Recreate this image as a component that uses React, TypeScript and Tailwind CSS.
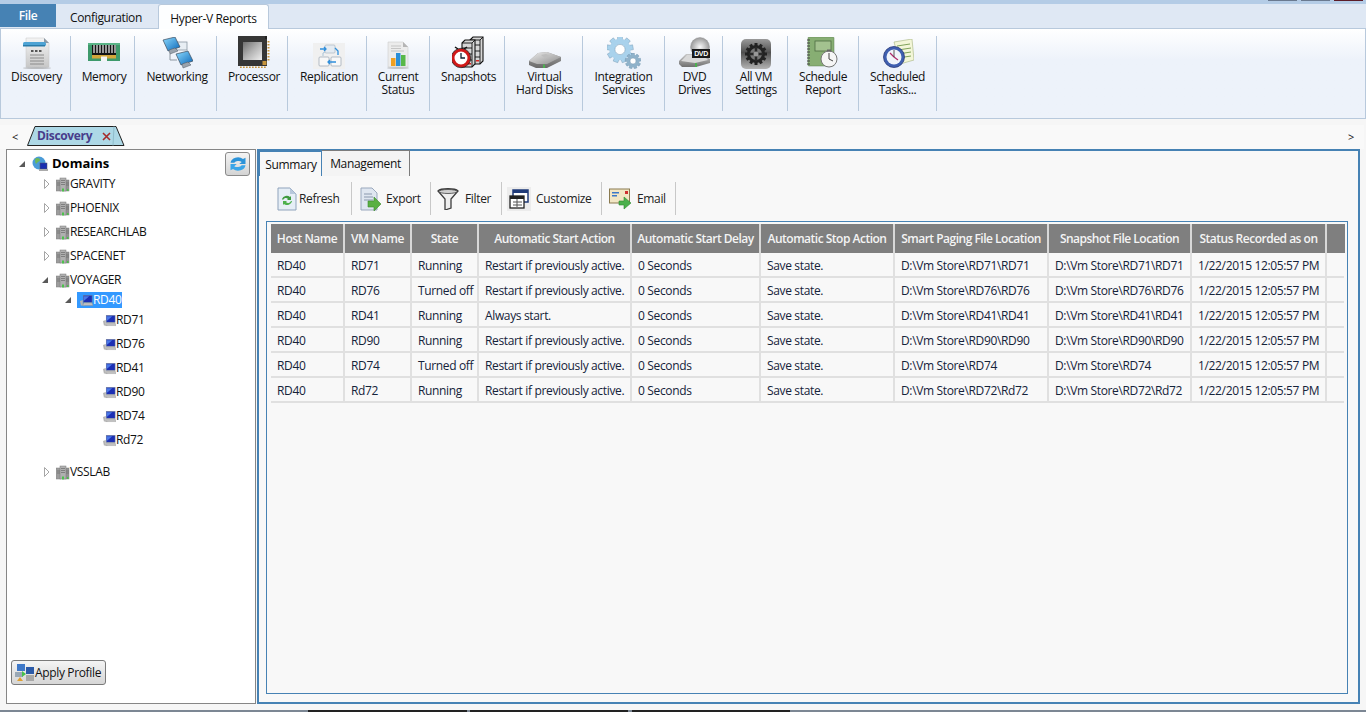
import React from "react";

const font = { fontFamily: '"Open Sans", "Noto Sans", sans-serif' };

function IDiscovery() {
  return (
    <svg width="32" height="32" viewBox="0 0 32 32">
      <defs>
        <linearGradient id="dg" x1="0" y1="0" x2="0" y2="1"><stop offset="0" stopColor="#f4f4f4" /><stop offset="1" stopColor="#c8c8c8" /></linearGradient>
      </defs>
      <path d="M5 1h18l5 5v24H5z" fill="url(#dg)" stroke="#c6c6c6" strokeWidth=".5" />
      <path d="M23 1l5 5h-5z" fill="#8d9aa6" />
      <rect x="2" y="5" width="23" height="4" rx="1.5" fill="#4ea3d4" />
      <rect x="2" y="8" width="22" height="1.5" fill="#2a7ba8" />
      <rect x="10" y="13" width="2.5" height="2" fill="#555" /><rect x="14" y="13" width="2.5" height="2" fill="#555" /><rect x="18" y="13" width="2.5" height="2" fill="#555" />
      <path d="M9 18h14M9 21h14M9 24h14M9 27h14" stroke="#8a8a8a" strokeWidth="1" />
      <ellipse cx="16" cy="31" rx="14" ry="1" fill="#999" opacity=".6" />
    </svg>
  );
}
function IMemory() {
  return (
    <svg width="32" height="32" viewBox="0 0 32 32">
      <rect x="0" y="6" width="32" height="18" fill="#3e9a6b" />
      <rect x="0" y="6" width="32" height="2" fill="#5ab487" />
      <rect x="4" y="8" width="24" height="10" fill="#141414" />
      <path d="M6 8v8M9 8v8M12 8v8M15 8v8M18 8v8M21 8v8M24 8v8M27 8v8" stroke="#efefef" strokeWidth="1.200" />
      <rect x="4" y="18" width="24" height="3.500" fill="#d2a63a" />
      <rect x="13" y="19.500" width="6" height="4.500" fill="#f4f4f4" />
    </svg>
  );
}
function Monitor({ x, y, id }: { x: number; y: number; id: string }) {
  return (
    <g transform={`translate(${x} ${y})`}>
      <defs>
        <linearGradient id={id} x1="0" y1="0" x2="1" y2="1"><stop offset="0" stopColor="#8fdcff" /><stop offset="1" stopColor="#0a66b8" /></linearGradient>
      </defs>
      <path d="M2 3l12-3 5 10-12 4z" fill={`url(#${id})`} stroke="#3c4b5c" strokeWidth=".7" />
      <path d="M8 13l6-2 3 3-8 3z" fill="#9aa3ad" stroke="#4f5964" strokeWidth=".5" />
    </g>
  );
}
function INetworking() {
  return (
    <svg width="32" height="32" viewBox="0 0 32 32">
      <path d="M9 17v6h7" fill="none" stroke="#8f98a1" strokeWidth="1" />
      <rect x="15" y="5" width="11" height="8" fill="#e8eef4" stroke="#8a96a2" strokeWidth=".8" />
      <Monitor x={0} y={0} id="nm1" />
      <Monitor x={13} y={14} id="nm2" />
    </svg>
  );
}
function IProcessor() {
  const bottom = [2, 5, 8, 11, 14, 17, 20, 23, 26];
  const right = [5, 8, 11, 14, 17, 20, 23];
  return (
    <svg width="33" height="33" viewBox="0 0 33 33">
      <defs>
        <linearGradient id="pg" x1="0" y1="0" x2="1" y2="1"><stop offset="0" stopColor="#6f6f6f" /><stop offset=".5" stopColor="#b4b4b4" /><stop offset="1" stopColor="#eeeeee" /></linearGradient>
      </defs>
      <rect x="0" y="0" width="29" height="30" fill="#363636" />
      <path d="M27 0h2v3h-2z" fill="#222" />
      <rect x="5" y="6" width="19" height="18" fill="url(#pg)" />
      <rect x="24.500" y="25" width="4" height="4" fill="#c8953c" />
      {right.map((y) => <rect key={y} x="29.500" y={y} width="2" height="1.500" fill="#c8953c" />)}
      {bottom.map((x) => <rect key={x} x={x} y="30.500" width="1.700" height="1.500" fill="#c8953c" />)}
    </svg>
  );
}
function IReplication() {
  return (
    <svg width="32" height="26" viewBox="0 0 32 26">
      <rect width="32" height="26" fill="#f0f0f0" />
      <rect x="12" y="2" width="10" height="8" rx="1" fill="#e4ebf2" stroke="#aeb8c3" strokeWidth=".7" />
      <rect x="6" y="14" width="10" height="9" rx="1" fill="#f8f8f8" stroke="#9aa5b1" strokeWidth=".7" />
      <rect x="18" y="14" width="10" height="9" rx="1" fill="#f8f8f8" stroke="#9aa5b1" strokeWidth=".7" />
      <path d="M7 6h6M11 4l2 2-2 2" fill="none" stroke="#2f8fdc" strokeWidth="1.300" />
      <path d="M22 5l3 3v4" fill="none" stroke="#2f8fdc" strokeWidth="1.300" />
      <path d="M10 13v-3l2-1" fill="none" stroke="#a9c4d8" strokeWidth="1" />
      <path d="M23 19h-8M17 17l-2 2 2 2" fill="none" stroke="#2f8fdc" strokeWidth="1.300" />
    </svg>
  );
}
function IStatus() {
  return (
    <svg width="24" height="28" viewBox="0 0 24 28">
      <path d="M2 1h15l5 5v20H2z" fill="#ececec" stroke="#c4c4c4" strokeWidth=".5" />
      <path d="M17 1l5 5h-5z" fill="#b5b5b5" />
      <path d="M5 5h10M5 7.500h10M5 10h13" stroke="#bbb" strokeWidth=".8" />
      <rect x="5" y="17" width="4.500" height="8" fill="#f0a020" />
      <rect x="10" y="12" width="4.500" height="13" fill="#2b8fd8" />
      <rect x="15" y="14" width="4.500" height="11" fill="#58b848" />
      <ellipse cx="12" cy="27" rx="11" ry="1" fill="#aaa" opacity=".6" />
    </svg>
  );
}
function Srv({ x }: { x: number }) {
  return (
    <g transform={`translate(${x} 0)`}>
      <path d="M0 4l3-3h10v24l-3 3H0z" fill="#d6d6d6" stroke="#111" strokeWidth="1.100" />
      <path d="M0 9h10M0 15h10M0 21h10M10 4v24M0 4h10l3-3" fill="none" stroke="#111" strokeWidth=".9" />
      <rect x="6" y="24" width="3" height="1.500" fill="#d22" />
    </g>
  );
}
function ISnapshots() {
  return (
    <svg width="33" height="33" viewBox="0 0 33 33">
      <Srv x={18} />
      <g transform="translate(10 3)"><Srv x={0} /></g>
      <circle cx="9" cy="22" r="8" fill="#fff" stroke="#d01818" strokeWidth="3" />
      <circle cx="9" cy="22" r="9.700" fill="none" stroke="#111" strokeWidth=".7" />
      <path d="M9 17v5h4" fill="none" stroke="#123" strokeWidth="1.300" />
      <path d="M3 11l3 2M15 11l-3 2" stroke="#111" strokeWidth="1.500" />
    </svg>
  );
}
function IDisk() {
  return (
    <svg width="32" height="17" viewBox="0 0 32 17">
      <defs>
        <linearGradient id="hd" x1="0" y1="0" x2="1" y2="1"><stop offset="0" stopColor="#ececec" /><stop offset="1" stopColor="#8e8e8e" /></linearGradient>
        <linearGradient id="hd2" x1="0" y1="0" x2="0" y2="1"><stop offset="0" stopColor="#a0a0a0" /><stop offset="1" stopColor="#6a6a6a" /></linearGradient>
      </defs>
      <path d="M0 9l9-8 9-1 14 5v4l-14 7-11 0-7-3z" fill="url(#hd2)" />
      <path d="M0 9L9 1l9-1 14 5-14 7-10 0z" fill="url(#hd)" />
      <path d="M12 3l5-1 4 2-5 2z" fill="#bdbdbd" />
      <rect x="14" y="12.500" width="2" height="3.500" fill="#4caf50" />
    </svg>
  );
}
function Gear({ cx, cy, r, fill }: { cx: number; cy: number; r: number; fill: string }) {
  const teeth = Array.from({ length: 9 }, (_, i) => i * 40);
  return (
    <g>
      {teeth.map((a) => <rect key={a} x={cx - r * 0.22} y={cy - r * 1.2} width={r * 0.44} height={r * 0.6} fill={fill} stroke="#6f93ad" strokeWidth=".4" transform={`rotate(${a} ${cx} ${cy})`} />)}
      <circle cx={cx} cy={cy} r={r * 0.72} fill="none" stroke={fill} strokeWidth={r * 0.5} />
      <circle cx={cx} cy={cy} r={r * 0.46} fill="#fff" stroke="#6f93ad" strokeWidth=".5" />
    </g>
  );
}
function IGears() {
  return (
    <svg width="34" height="32" viewBox="0 0 34 32">
      <Gear cx={13} cy={12.500} r={11} fill="#a9d2ec" />
      <Gear cx={26} cy={24} r={6.500} fill="#8fb2ca" />
    </svg>
  );
}
function IDvd() {
  return (
    <svg width="32" height="32" viewBox="0 0 32 32">
      <defs>
        <radialGradient id="dv"><stop offset="0" stopColor="#f8f8f8" /><stop offset="1" stopColor="#9a9a9a" /></radialGradient>
        <linearGradient id="dv2" x1="0" y1="0" x2="0" y2="1"><stop offset="0" stopColor="#c8c8c8" /><stop offset="1" stopColor="#707070" /></linearGradient>
      </defs>
      <circle cx="21" cy="10" r="9.500" fill="url(#dv)" stroke="#888" strokeWidth=".4" />
      <path d="M0 24l7-7 18 0 6 5v4l-14 4-14 0-3-3z" fill="url(#dv2)" />
      <path d="M2 24l6-6h16l5 5-13 3z" fill="#d8d8d8" />
      <rect x="13" y="12" width="18" height="9" fill="#1a1a1a" />
      <text x="22" y="19" fontSize="7" fontWeight="700" fill="#fff" textAnchor="middle" fontFamily="Liberation Sans">DVD</text>
      <rect x="16" y="26" width="2" height="4" fill="#4caf50" />
    </svg>
  );
}
function IAllVm() {
  const teeth = Array.from({ length: 12 }, (_, i) => i * 30);
  return (
    <svg width="30" height="30" viewBox="0 0 30 30">
      <defs>
        <linearGradient id="av" x1="0" y1="0" x2="0" y2="1"><stop offset="0" stopColor="#9a9a9a" /><stop offset=".45" stopColor="#505050" /><stop offset="1" stopColor="#b4b4b4" /></linearGradient>
      </defs>
      <rect width="30" height="30" rx="5" fill="url(#av)" />
      {teeth.map((a) => <rect key={a} x="13.500" y="4" width="3" height="4" fill="#222" transform={`rotate(${a} 15 15)`} />)}
      <circle cx="15" cy="15" r="7.500" fill="#777" stroke="#222" strokeWidth="3" />
      <path d="M15 8v14M8 15h14" stroke="#2a2a2a" strokeWidth="2.500" />
      <circle cx="15" cy="15" r="2.500" fill="#999" />
    </svg>
  );
}
function IReport() {
  return (
    <svg width="32" height="32" viewBox="0 0 32 32">
      <rect x="1" y="0" width="26" height="29" rx="1" fill="#87ae73" stroke="#5f7f52" strokeWidth=".5" />
      <rect x="8" y="4" width="16" height="10" fill="#a3c28f" stroke="#4e6d43" strokeWidth=".8" />
      <path d="M0 3h3M0 6h3M0 9h3M0 12h3M0 15h3M0 18h3M0 21h3M0 24h3M0 27h3" stroke="#444" strokeWidth="1" />
      <circle cx="22" cy="22" r="8" fill="#f6f6f6" stroke="#777" strokeWidth="1" />
      <path d="M22 16v6l4 2" fill="none" stroke="#444" strokeWidth="1" />
      <rect x="20" y="12.500" width="4" height="2" fill="#666" />
    </svg>
  );
}
function ITasks() {
  return (
    <svg width="32" height="30" viewBox="0 0 32 30">
      <path d="M12 3l18-3 2 21-14 4z" fill="#f3f6d8" stroke="#a4b27c" strokeWidth=".6" />
      <path d="M15 7l13-2M16 11l13-2M16 15l13-2M16 19l13-2" stroke="#7fa25a" strokeWidth="1" />
      <circle cx="12" cy="18" r="10.500" fill="#3f5fb0" stroke="#2b3a78" strokeWidth=".8" />
      <circle cx="12" cy="18" r="7.500" fill="#f0f4fa" />
      <path d="M12 18l-4-4M12 18l4 3" stroke="#b02a6a" strokeWidth="1.200" />
      <path d="M12 18V11" stroke="#333" strokeWidth=".8" />
    </svg>
  );
}

function ServerSmall() {
  return (
    <svg width="14" height="15" viewBox="0 0 14 15" className="shrink-0">
      <rect x="0" y="3" width="5" height="11" fill="#9c9c9c" stroke="#808080" strokeWidth=".5" />
      <rect x="8" y="3" width="5" height="11" fill="#929292" stroke="#808080" strokeWidth=".5" />
      <rect x="4" y="1" width="6" height="13" fill="#b0b0b0" stroke="#7c7c7c" strokeWidth=".5" />
      <path d="M5 3.500h4M5 5.500h4M5 7.500h4M1 6h3M10 6h3M1 8h3M10 8h3" stroke="#6a6a6a" strokeWidth=".7" />
      <rect x="6" y="11.500" width="2" height="3" fill="#4cc14c" />
      <rect x="11" y="12" width="1.500" height="2" fill="#4cc14c" />
    </svg>
  );
}
function PcSmall() {
  return (
    <svg width="13" height="14" viewBox="0 0 14 14" className="shrink-0">
      <path d="M0 8l3-1v5l3 1H1z" fill="#b4b4b4" />
      <rect x="3.500" y="2" width="9.500" height="7.500" fill="#1c2fb4" stroke="#6c7a9a" strokeWidth=".6" />
      <path d="M4 3h6L4 8z" fill="#4a78e6" />
      <path d="M4 10h9l1 3H3z" fill="#c0c0c0" stroke="#8a8a8a" strokeWidth=".4" />
    </svg>
  );
}
function Filled() {
  return (
    <svg width="8" height="8" viewBox="0 0 8 8" className="shrink-0">
      <path d="M7 1v6H1z" fill="#595959" />
    </svg>
  );
}
function Hollow() {
  return (
    <svg width="6" height="10" viewBox="0 0 6 10" className="shrink-0">
      <path d="M.5 .5L5 5 .5 9.500z" fill="#fff" stroke="#a6a6a6" />
    </svg>
  );
}

function Sync({ size }: { size: number }) {
  return (
    <svg width={size} height={size} viewBox="0 0 16 16">
      <path d="M2 7a6 5 0 0 1 10-3l2-1v5H9l2-1.700a4 3 0 0 0-6 .7z" fill="#2b93d9" />
      <path d="M14 9a6 5 0 0 1-10 3l-2 1V8h5L5 9.700a4 3 0 0 0 6-.7z" fill="#3aa5e8" />
    </svg>
  );
}

const ribbon: { w: string; label: string[]; icon: React.ReactNode }[] = [
  { w: "w-[70px] pl-[2px]", label: ["Discovery"], icon: <IDiscovery /> },
  { w: "w-[64px] pl-[3px]", label: ["Memory"], icon: <IMemory /> },
  { w: "w-[82px] pl-[3px]", label: ["Networking"], icon: <INetworking /> },
  { w: "w-[71px] pl-[4px]", label: ["Processor"], icon: <IProcessor /> },
  { w: "w-[79px] pl-[4px]", label: ["Replication"], icon: <IReplication /> },
  { w: "w-[63px]", label: ["Current", "Status"], icon: <IStatus /> },
  { w: "w-[75px] pl-[3px]", label: ["Snapshots"], icon: <ISnapshots /> },
  { w: "w-[78px] pl-[2px]", label: ["Virtual", "Hard Disks"], icon: <IDisk /> },
  { w: "w-[82px]", label: ["Integration", "Services"], icon: <IGears /> },
  { w: "w-[58px] pl-[2px]", label: ["DVD", "Drives"], icon: <IDvd /> },
  { w: "w-[65px] pl-[2px]", label: ["All VM", "Settings"], icon: <IAllVm /> },
  { w: "w-[71px]", label: ["Schedule", "Report"], icon: <IReport /> },
  { w: "w-[78px]", label: ["Scheduled", "Tasks..."], icon: <ITasks /> },
];

const cols = ["Host Name", "VM Name", "State", "Automatic Start Action", "Automatic Start Delay", "Automatic Stop Action", "Smart Paging File Location", "Snapshot File Location", "Status Recorded as on"];
const rows = [
  ["RD40", "RD71", "Running", "Restart if previously active.", "0 Seconds", "Save state.", "D:\\Vm Store\\RD71\\RD71", "D:\\Vm Store\\RD71\\RD71", "1/22/2015 12:05:57 PM"],
  ["RD40", "RD76", "Turned off", "Restart if previously active.", "0 Seconds", "Save state.", "D:\\Vm Store\\RD76\\RD76", "D:\\Vm Store\\RD76\\RD76", "1/22/2015 12:05:57 PM"],
  ["RD40", "RD41", "Running", "Always start.", "0 Seconds", "Save state.", "D:\\Vm Store\\RD41\\RD41", "D:\\Vm Store\\RD41\\RD41", "1/22/2015 12:05:57 PM"],
  ["RD40", "RD90", "Running", "Restart if previously active.", "0 Seconds", "Save state.", "D:\\Vm Store\\RD90\\RD90", "D:\\Vm Store\\RD90\\RD90", "1/22/2015 12:05:57 PM"],
  ["RD40", "RD74", "Turned off", "Restart if previously active.", "0 Seconds", "Save state.", "D:\\Vm Store\\RD74", "D:\\Vm Store\\RD74", "1/22/2015 12:05:57 PM"],
  ["RD40", "Rd72", "Running", "Restart if previously active.", "0 Seconds", "Save state.", "D:\\Vm Store\\RD72\\Rd72", "D:\\Vm Store\\RD72\\Rd72", "1/22/2015 12:05:57 PM"],
];
const gridCols = "grid grid-cols-[74px_67px_67px_153px_129px_134px_154px_143px_135px_18px]";

function TreeRow({ cls, pad, arrow, icon, children }: { cls: string; pad: string; arrow?: React.ReactNode; icon: React.ReactNode; children: React.ReactNode }) {
  return (
    <div className={`flex items-center ${cls} ${pad}`}>
      <span className="w-[12px] flex items-center">{arrow}</span>
      {icon}
      <span className="text-[12px] text-[#111]">{children}</span>
    </div>
  );
}

function ToolBtn({ w, icon, label }: { w: string; icon: React.ReactNode; label: string }) {
  return (
    <div className={`${w} h-[33px] flex items-center border-r border-[#c8c8c8]`}>
      {icon}
      <span className="text-[12px] text-[#222] pt-px">{label}</span>
    </div>
  );
}

export default function App() {
  return (
    <div style={font} className="w-[1366px] h-[712px] overflow-hidden flex flex-col bg-[#f6f6f6] tracking-[-0.35px]">
      {/* title strip */}
      <div className="h-[4px] bg-[#b4cce6] flex justify-end gap-[4px] pr-[3px] shrink-0">
        <div className="w-[29px] h-px bg-[#6a7a90]" />
        <div className="w-[29px] h-px bg-[#6a7a90]" />
        <div className="w-[29px] h-px bg-[#5c1c28]" />
      </div>
      {/* ribbon tabs */}
      <div className="h-[24px] bg-[#dfe8f4] flex shrink-0 items-end relative">
        <div className="w-[56px] h-[23px] mb-px bg-[#4682b4] text-white text-[12px] font-semibold flex items-center justify-center pt-px">File</div>
        <div className="w-[102px] h-[24px] pt-[4px] pr-[2px] text-[12px] text-[#111] flex items-center justify-center">Configuration</div>
        <div className="w-[111px] h-[25px] -mb-px pt-[3px] bg-[#fdfeff] border border-b-0 border-[#b8c9dc] rounded-t-[3px] text-[12px] text-[#111] flex items-center justify-center z-10">Hyper-V Reports</div>
      </div>
      {/* ribbon */}
      <div className="h-[91px] shrink-0 flex pt-[7px] border border-[#b8c9dc] bg-gradient-to-b from-white via-[#edf2fa] via-[35%] to-[#edf2fa]">
        {ribbon.map((r) => (
          <div key={r.label.join(" ")} className={`${r.w} h-[75px] shrink-0 border-r border-[#b8c9dc] flex flex-col items-center`}>
            <div className="h-[33px] flex items-end justify-center">{r.icon}</div>
            <div className="mt-px text-[12px] leading-[13px] text-[#111] text-center whitespace-nowrap">
              {r.label.map((l) => <div key={l}>{l}</div>)}
            </div>
          </div>
        ))}
      </div>
      {/* doc tabs */}
      <div className="h-[24px] mt-[6px] mr-[2px] bg-[#f9f9f9] flex items-end justify-between shrink-0 pl-[12px] pr-[10px]">
        <span className="text-[11px] text-[#111] self-center w-[15px]">&lt;</span>
        <div className="relative w-[98px] h-[20px] mb-[3px] flex items-center pl-[10px] gap-[10px]">
          <svg width="98" height="20" viewBox="0 0 98 20" className="absolute inset-0">
            <path d="M.5 19.500L8 .5h81l8 19z" fill="#add8e6" stroke="#222" />
            <path d="M87 .5l-1 19" stroke="#8fbccb" />
          </svg>
          <span className="relative text-[12px] font-bold text-[#483d8b]">Discovery</span>
          <span className="relative">
            <svg width="9" height="9" viewBox="0 0 9 9" className="block"><path d="M1 1l7 7M8 1L1 8" stroke="#a52a2a" strokeWidth="1.600" /></svg>
          </span>
        </div>
        <span className="flex-1" />
        <span className="text-[11px] text-[#111] self-center">&gt;</span>
      </div>
      {/* main */}
      <div className="h-[555px] flex shrink-0 pl-[6px] pr-[6px]">
        <div className="w-[250px] shrink-0 bg-white border border-[#868686] flex flex-col pt-[3px]">
          <div className="relative">
            <div className="flex items-center h-[22px] pl-[11px]">
              <Filled />
              <svg width="16" height="16" viewBox="0 0 16 16" className="ml-[6px] shrink-0">
                <circle cx="7" cy="7" r="6.500" fill="#4a9bd8" />
                <path d="M3 3c2-2 5-1 5 1s-2 1-3 3-2 0-2-4zM8 8c2-1 4 0 4 1s-2 3-3 3-1-3-1-4z" fill="#6cb85a" />
                <rect x="8" y="7" width="7" height="6" fill="#1a2fb0" stroke="#556" strokeWidth=".5" />
                <rect x="7" y="13" width="9" height="2" fill="#aaa" />
              </svg>
              <span className="ml-[4px] text-[13px] tracking-[0px] font-bold text-black">Domains</span>
            </div>
            <button className="absolute right-[5px] top-[-1px] w-[25px] h-[24px] rounded-[3px] border border-[#8a8a8a] bg-gradient-to-b from-[#f4f4f4] to-[#d4d4d4] flex items-center justify-center">
              <Sync size={20} />
            </button>
          </div>
          <TreeRow cls="h-6 -mt-[3px]" pad="pl-[37px]" arrow={<Hollow />} icon={<ServerSmall />}>GRAVITY</TreeRow>
          <TreeRow cls="h-6" pad="pl-[37px]" arrow={<Hollow />} icon={<ServerSmall />}>PHOENIX</TreeRow>
          <TreeRow cls="h-6" pad="pl-[37px]" arrow={<Hollow />} icon={<ServerSmall />}>RESEARCHLAB</TreeRow>
          <TreeRow cls="h-6" pad="pl-[37px]" arrow={<Hollow />} icon={<ServerSmall />}>SPACENET</TreeRow>
          <TreeRow cls="h-6" pad="pl-[34px]" arrow={<Filled />} icon={<span className="ml-[3px]"><ServerSmall /></span>}>VOYAGER</TreeRow>
          <div className="h-4 flex items-center pl-[57px]">
            <Filled />
            <div className="ml-[5px] w-[45px] h-[16px] bg-[#3399ff] flex items-center pl-[3px]">
              <PcSmall />
              <span className="text-[12px] text-white">RD40</span>
            </div>
          </div>
          <div className="flex flex-col">
            {["RD71", "RD76", "RD41", "RD90", "RD74", "Rd72"].map((n) => (
              <div key={n} className="h-6 flex items-center pl-[96px]">
                <PcSmall />
                <span className="text-[12px] text-[#111]">{n}</span>
              </div>
            ))}
          </div>
          <TreeRow cls="h-6 mt-[8px]" pad="pl-[37px]" arrow={<Hollow />} icon={<ServerSmall />}>VSSLAB</TreeRow>
          <button className="mt-auto mb-[18px] ml-[4px] w-[95px] h-[25px] rounded-[3px] border border-[#7a7a7a] bg-gradient-to-b from-[#f4f4f4] to-[#d6d6d6] flex items-center pl-[3px]">
            <svg width="20" height="18" viewBox="0 0 20 18" className="shrink-0">
              <rect x="2" y="0" width="8" height="7" fill="#3e78c8" />
              <rect x="11" y="3" width="8" height="7" fill="#2b5aa8" />
              <rect x="0" y="8" width="8" height="5" fill="#9aa8b5" />
              <rect x="11" y="11" width="8" height="6" fill="#a8a8a8" />
              <path d="M7 7l4 3-4 3z" fill="#45c04a" />
              <path d="M2 17l3-4 3 4z" fill="#e0a030" />
            </svg>
            <span className="text-[12px] text-[#111]">Apply Profile</span>
          </button>
        </div>
        <div className="ml-px flex-1 border-2 border-[#4682b4] bg-[#f8f8f8] flex flex-col min-w-0">
          <div className="h-[25px] flex items-end shrink-0">
            <div className="w-[63px] h-[25px] pt-[2px] pl-px border border-b-0 border-[#4682b4] bg-[#f8f8f8] text-[12px] text-[#111] flex items-center justify-center">Summary</div>
            <div className="w-[88px] h-[26px] pt-px border border-[#7c7c7c] border-b-0 border-l-0 bg-[#f4f4f4] text-[12px] text-[#111] flex items-center justify-center">Management</div>
          </div>
          <div className="h-[33px] mt-[6px] flex pl-[7px] shrink-0">
            <ToolBtn w="w-[86px] pl-[11px] gap-[2px]" icon={
              <svg width="20" height="24" viewBox="0 0 20 24"><path d="M1 1h12l6 6v16H1z" fill="#e6eef6" stroke="#8fa3bc" /><path d="M13 1l6 6h-6z" fill="#b8c8dc" /><path d="M5 12a5 5 0 0 1 8-2l1-1v4h-4l1-1a3 3 0 0 0-5 1z" fill="#3e9a3e" /><path d="M15 14a5 5 0 0 1-8 3l-1 1v-4h4l-1 1a3 3 0 0 0 5-1z" fill="#4cb04c" /></svg>
            } label="Refresh" />
            <ToolBtn w="w-[79px] pl-[8px] gap-[5px]" icon={
              <svg width="21" height="24" viewBox="0 0 21 24"><path d="M1 1h11l5 5v17H1z" fill="#dfe6f0" stroke="#9aa8bd" /><path d="M4 7h8M4 10h9M4 13h9" stroke="#8a98ad" /><path d="M8 14h6v-4l7 7-7 7v-4H8z" fill="#5ab043" stroke="#3d8a2c" strokeWidth=".6" /></svg>
            } label="Export" />
            <ToolBtn w="w-[71px] pl-[6px] gap-[6px]" icon={
              <svg width="22" height="22" viewBox="0 0 22 22"><path d="M1 3c3-3 17-3 20 0l-7 8v9l-6 2V11z" fill="#efefef" stroke="#3c3c3c" strokeWidth="1.300" /><ellipse cx="11" cy="3.500" rx="9" ry="2" fill="#cfcfcf" stroke="#444" strokeWidth=".8" /></svg>
            } label="Filter" />
            <ToolBtn w="w-[100px] pl-[5px] gap-[5px]" icon={
              <svg width="24" height="24" viewBox="0 0 24 24"><rect width="24" height="24" fill="#ececec" /><rect x="6" y="3" width="15" height="12" fill="#fff" stroke="#1f3a78" strokeWidth="1.500" /><rect x="6" y="3" width="15" height="3" fill="#1f3a78" /><rect x="3" y="9" width="14" height="12" fill="#fff" stroke="#222" strokeWidth="1.300" /><rect x="3" y="9" width="14" height="3" fill="#222" /><path d="M6 15h9M6 18h9M10 12v8" stroke="#555" /></svg>
            } label="Customize" />
            <ToolBtn w="w-[74px] pl-[7px] gap-[5px]" icon={
              <svg width="23" height="22" viewBox="0 0 23 22"><rect x="0.500" y="1" width="20" height="14" fill="#f2e6c4" stroke="#8a7a50" /><rect x="3" y="4" width="7" height="1.500" fill="#3c78c8" /><rect x="3" y="7" width="5" height="1.500" fill="#3c78c8" /><rect x="16" y="3" width="3" height="3" fill="#d03030" /><path d="M10 13h5V9l7 6-7 6v-4h-5z" fill="#4cb04c" stroke="#2f8a2f" strokeWidth=".6" /></svg>
            } label="Email" />
          </div>
          <div className="mt-[6px] ml-[7px] mr-[10px] mb-[8px] flex-1 border border-[#4682b4] bg-[#f8f8f8] pt-[2px] pl-[4px] pr-[3px] min-h-0">
            <div className={`${gridCols} h-[29px]`}>
              {cols.map((c) => (
                <div key={c} className="bg-[#7f7f7f] border-r-2 border-[#d8d8d8] text-[12px] font-semibold tracking-[-0.5px] text-[#f4f4f4] flex items-center justify-center whitespace-nowrap">{c}</div>
              ))}
              <div className="bg-[#7f7f7f]" />
            </div>
            {rows.map((r, i) => (
              <div key={i} className={`${gridCols} h-[25px] border-b-[2px] border-[#e0e0e0]`}>
                {r.map((v, j) => (
                  <div key={j} className="border-r-[2px] border-[#e0e0e0] pl-[6px] pt-[2px] text-[12px] text-[#15233a] flex items-center whitespace-nowrap">{v}</div>
                ))}
                <div />
              </div>
            ))}
          </div>
        </div>
      </div>
      <div className="mt-auto h-[2px] flex shrink-0 bg-[#7c8794]">
        <div className="w-[308px]" />
        <div className="w-[159px] bg-[#222]" />
        <div className="w-[3px]" />
        <div className="w-[158px] bg-[#222]" />
        <div className="w-[4px]" />
        <div className="w-[158px] bg-[#222]" />
      </div>
    </div>
  );
}
